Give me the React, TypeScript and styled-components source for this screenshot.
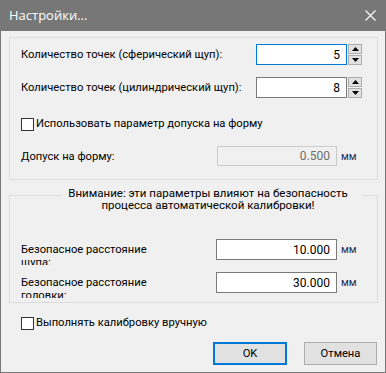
import styled, { createGlobalStyle } from "styled-components"

const GlobalStyle = createGlobalStyle`
  html, body {
    margin: 0;
    padding: 0;
    background: #f0f0f0;
  }
  * {
    box-sizing: border-box;
  }
`

const Window = styled.div`
  width: 386px;
  height: 373px;
  display: flex;
  flex-direction: column;
  background: #f0f0f0;
  border: 1px solid #777777;
  border-top: none;
  font-family: Roboto, "Liberation Sans", sans-serif;
  font-size: 11.2px;
  color: #000;
`

const TitleBar = styled.div`
  height: 31px;
  margin: 0 -1px;
  background: #777777;
  display: flex;
  align-items: center;
  justify-content: space-between;
  padding: 0 10px 1px 9px;
  color: #fff;
  font-family: "Open Sans", "Noto Sans", sans-serif;
  font-size: 13px;
`

const Body = styled.div`
  display: flex;
  flex-direction: column;
  padding: 6px 7px 0 8px;
`

const GroupBox = styled.div<{ $h: number; $mt?: number }>`
  height: ${(p) => p.$h}px;
  margin-top: ${(p) => p.$mt ?? 0}px;
  border: 1px solid #dcdcdc;
  display: flex;
  flex-direction: column;
  padding-left: 11px;
`

const Caption = styled.div`
  margin: -9px 0 0 41px;
  width: 300px;
  background: #f0f0f0;
  text-align: center;
  line-height: 12px;
  font-size: 11.5px;
  padding-right: 8px;
`

const Row = styled.div<{ $mt: number; $h?: number }>`
  display: flex;
  align-items: center;
  margin-top: ${(p) => p.$mt}px;
  height: ${(p) => p.$h ?? 21}px;
`

const Label = styled.div<{ $w: number }>`
  width: ${(p) => p.$w}px;
  flex-shrink: 0;
  white-space: nowrap;
`

const WrapLabel = styled.div`
  width: 195px;
  flex-shrink: 0;
  align-self: flex-start;
  margin-top: 4px;
  height: 22px;
  overflow: hidden;
  line-height: 13px;
  padding-right: 58px;
`

const Field = styled.div<{ $w: number; $focus?: boolean; $disabled?: boolean }>`
  width: ${(p) => p.$w}px;
  height: 100%;
  border: 1px solid
    ${(p) => (p.$focus ? "#0078d7" : p.$disabled ? "#cccccc" : "#7a7a7a")};
  background: ${(p) => (p.$disabled ? "#f0f0f0" : "#fff")};
  color: ${(p) => (p.$disabled ? "#6d6d6d" : "#000")};
  display: flex;
  align-items: center;
  justify-content: flex-end;
  padding-right: 6px;
  font-size: 12px;
`

const Spinner = styled.div`
  display: flex;
  flex-direction: column;
  gap: 1px;
  margin-left: 1px;
  height: 100%;
  justify-content: center;
`

const SpinButton = styled.div`
  width: 14px;
  height: 10px;
  background: #e1e1e1;
  border: 1px solid #adadad;
  display: flex;
  align-items: center;
  justify-content: center;
`

const Unit = styled.span`
  margin-left: 4px;
  color: #1e2a55;
  font-size: 10.5px;
`

const CheckRow = styled.label<{ $mt: number; $pl: number }>`
  display: flex;
  align-items: center;
  height: 21px;
  margin-top: ${(p) => p.$mt}px;
  padding-left: ${(p) => p.$pl}px;
`

const CheckBox = styled.span`
  width: 13px;
  height: 13px;
  border: 1px solid #333333;
  background: #fff;
  margin-right: 2px;
  margin-top: 1px;
`

const ButtonBar = styled.div`
  display: flex;
  justify-content: flex-end;
  gap: 17px;
  margin-top: 9px;
  padding-right: 1px;
`

const Button = styled.button<{ $primary?: boolean }>`
  width: ${(p) => (p.$primary ? 74 : 73)}px;
  height: 23px;
  background: #e1e1e1;
  border: ${(p) => (p.$primary ? "2px solid #0078d7" : "1px solid #adadad")};
  font-family: Roboto, "Liberation Sans", sans-serif;
  font-size: 11.2px;
  color: #000;
  padding: 0;
`

const Arrow = ({ up }: { up?: boolean }) => (
  <svg width="7" height="4" viewBox="0 0 7 4">
    <path d={up ? "M0 4 L3.5 0 L7 4 Z" : "M0 0 L3.5 4 L7 0 Z"} fill="#000" />
  </svg>
)

const SpinField = ({ value, focus }: { value: string; focus?: boolean }) => (
  <>
    <Field $w={91} $focus={focus}>{value}</Field>
    <Spinner>
      <SpinButton><Arrow up /></SpinButton>
      <SpinButton><Arrow /></SpinButton>
    </Spinner>
  </>
)

const App = () => {
  return (
    <Window>
      <GlobalStyle />
      <TitleBar>
        <span>Настройки...</span>
        <svg width="11" height="11" viewBox="0 0 11 11">
          <path d="M0.5 0.5 L10.5 10.5 M10.5 0.5 L0.5 10.5" stroke="#fff" strokeWidth="1.1" />
        </svg>
      </TitleBar>
      <Body>
        <GroupBox $h={143}>
          <Row $mt={6}>
            <Label $w={235}>Количество точек (сферический щуп):</Label>
            <SpinField value="5" focus />
          </Row>
          <Row $mt={12}>
            <Label $w={235}>Количество точек (цилиндрический щуп):</Label>
            <SpinField value="8" />
          </Row>
          <CheckRow $mt={15} $pl={0}>
            <CheckBox />
            Использовать параметр допуска на форму
          </CheckRow>
          <Row $mt={12} $h={20}>
            <Label $w={196}>Допуск на форму:</Label>
            <Field $w={120} $disabled>0.500</Field>
            <Unit>мм</Unit>
          </Row>
        </GroupBox>

        <GroupBox $h={108} $mt={15}>
          <Caption>
            Внимание: эти параметры влияют на безопасность
            <br />
            процесса автоматической калибровки!
          </Caption>
          <Row $mt={28}>
            <WrapLabel>Безопасное расстояние щупа:</WrapLabel>
            <Field $w={121}>10.000</Field>
            <Unit>мм</Unit>
          </Row>
          <Row $mt={12}>
            <WrapLabel>Безопасное расстояние головки:</WrapLabel>
            <Field $w={121}>30.000</Field>
            <Unit>мм</Unit>
          </Row>
        </GroupBox>

        <CheckRow $mt={9} $pl={12}>
          <CheckBox />
          Выполнять калибровку вручную
        </CheckRow>

        <ButtonBar>
          <Button $primary>OK</Button>
          <Button>Отмена</Button>
        </ButtonBar>
      </Body>
    </Window>
  )
}

export default App
